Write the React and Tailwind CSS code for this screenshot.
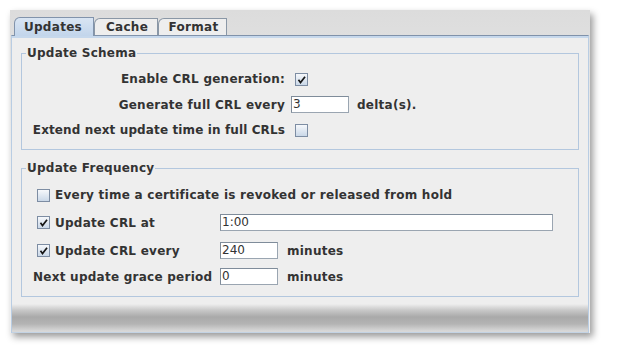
import React from "react";

function CheckBox({ checked }) {
  return (
    <div className="w-[13px] h-[13px] border border-[#7d8da3] bg-gradient-to-b from-[#f6f8fb] to-[#cad8e8] flex items-center justify-center shrink-0">
      {checked && (
        <svg width="11" height="11" viewBox="0 0 11 11">
          <path d="M3 6.5 L4.5 8.5 L8.5 3.5" fill="none" stroke="#151515" strokeWidth="1.7" strokeLinecap="square" />
        </svg>
      )}
    </div>
  );
}

function Field({ value, w }) {
  return (
    <div className={`h-[17px] ${w} bg-white border border-[#7f8c9a] border-r-[#9aa5b1] border-b-[#9aa5b1] font-normal text-[12px] leading-[15px] pl-[1px] text-[#333] tracking-normal`}>
      {value}
    </div>
  );
}

function Tab({ label, selected, w }) {
  return (
    <div className={`relative ${w} ${selected ? "h-[19px] z-10 -mb-[1px]" : "h-[17px]"} flex items-center justify-center`}>
      <div
        className={`absolute inset-0 border-t border-r border-l ${selected ? "border-[#8193ab] bg-gradient-to-b from-[#d9e5f3] to-[#c2d5eb]" : "border-[#8a97a6] bg-[#eeeeee]"} rounded-tl-[6px]`}
      />
      <span className={`relative text-[12px] font-bold text-[#333] tracking-[0.3px] ${selected ? "pr-[2px]" : "pl-[2px]"}`}>{label}</span>
    </div>
  );
}

export default function App() {
  return (
    <div className="w-[617px] h-[357px] bg-white font-['DejaVu_Sans',sans-serif] text-[#333] overflow-hidden">
      <div className="ml-[10px] mt-[10px] w-[580px] h-[323px] bg-gradient-to-b from-[#dcdcdc] via-[#eeeeee] to-[#eeeeee] shadow-[3px_4px_7px_rgba(0,0,0,0.4)] flex flex-col px-[1px] pt-[6px]">
        <div className="flex items-end pl-[3px] h-[19px]">
          <Tab label="Updates" selected w="w-[80px]" />
          <Tab label="Cache" w="w-[64px]" />
          <Tab label="Format" w="w-[69px]" />
        </div>
        <div className="flex-1 border-t border-[#8092aa] border-l border-l-[#b9cde3] border-r border-r-[#b9cde3] flex flex-col">
          <div className="h-[2px] bg-[#c6d8ec]" />
          <div className="flex-1 flex flex-col px-[9px] pt-[8px] tracking-[0.25px] bg-[linear-gradient(to_bottom,#eeeeee_0px,#eeeeee_266px,#c9c9c9_272px,#a9a9a9_279px,#b4b4b4_286px,#d8d8d8_293px)]">
            <fieldset className="border border-[#b3c7de] pb-[6px]">
              <legend className="ml-[4px] px-[1px] text-[12px] leading-[15px] font-bold">Update Schema</legend>
              <div className="grid grid-cols-[263px_auto] text-[12px] font-bold pt-[5px]">
                <div className="h-[26px] flex items-center justify-end">Enable CRL generation:</div>
                <div className="h-[26px] flex items-center pl-[10px]">
                  <CheckBox checked />
                </div>
                <div className="h-[25px] flex items-center justify-end">Generate full CRL every</div>
                <div className="h-[25px] flex items-center pl-[6px] gap-[8px]">
                  <Field value="3" w="w-[58px]" />
                  <span>delta(s).</span>
                </div>
                <div className="h-[26px] flex items-center justify-end tracking-[0.12px]">Extend next update time in full CRLs</div>
                <div className="h-[26px] flex items-center pl-[10px]">
                  <CheckBox />
                </div>
              </div>
            </fieldset>
            <fieldset className="border border-[#b3c7de] mt-[11px] pb-[7px]">
              <legend className="ml-[4px] px-[1px] text-[12px] leading-[15px] font-bold">Update Frequency</legend>
              <div className="grid grid-cols-[187px_auto] text-[12px] font-bold pl-[11px] pt-[6px]">
                <div className="col-span-2 h-[26px] flex items-center pl-[4px] gap-[5px]">
                  <CheckBox />
                  <span>Every time a certificate is revoked or released from hold</span>
                </div>
                <div className="h-[29px] flex items-center pl-[4px] gap-[5px]">
                  <CheckBox checked />
                  <span>Update CRL at</span>
                </div>
                <div className="h-[29px] flex items-center">
                  <Field value="1:00" w="w-[333px]" />
                </div>
                <div className="h-[27px] flex items-center pl-[4px] gap-[5px]">
                  <CheckBox checked />
                  <span>Update CRL every</span>
                </div>
                <div className="h-[27px] flex items-center gap-[9px]">
                  <Field value="240" w="w-[58px]" />
                  <span>minutes</span>
                </div>
                <div className="h-[25px] flex items-center">Next update grace period</div>
                <div className="h-[25px] flex items-center gap-[9px]">
                  <Field value="0" w="w-[58px]" />
                  <span>minutes</span>
                </div>
              </div>
            </fieldset>
          </div>
          <div className="h-[1px] bg-[#c3d3e4]" />
        </div>
      </div>
    </div>
  );
}
